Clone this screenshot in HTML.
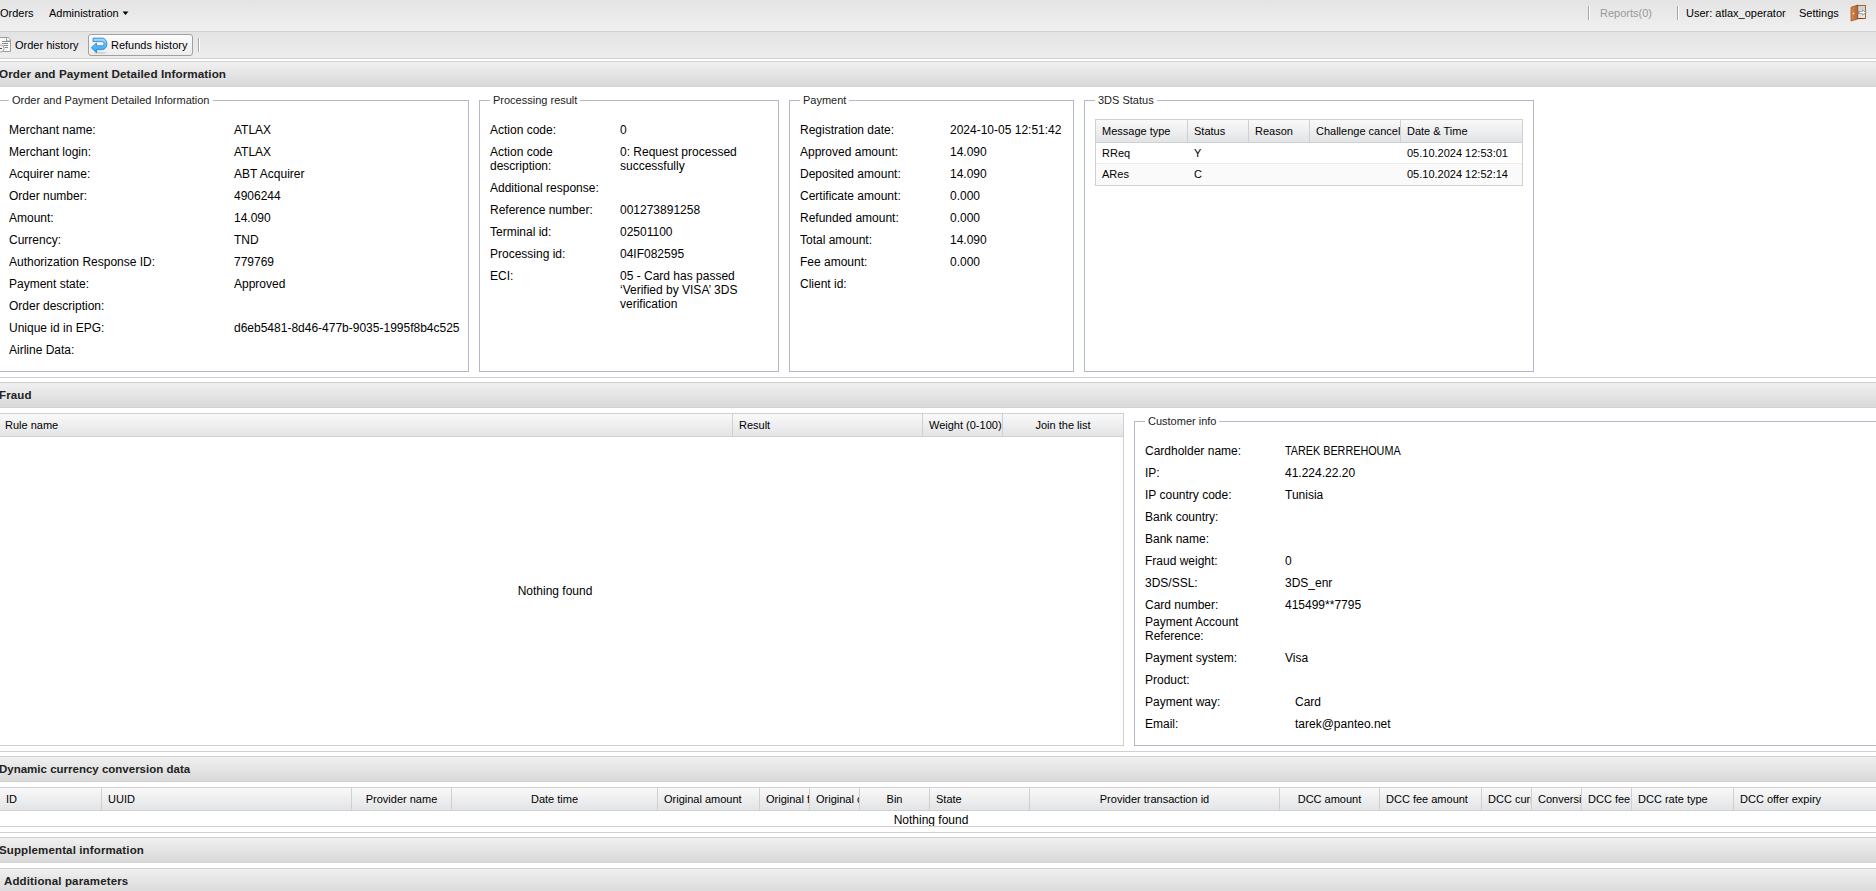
<!DOCTYPE html>
<html><head><meta charset="utf-8"><title>Order</title>
<style>
html,body{margin:0;padding:0;width:1876px;height:891px;overflow:hidden;background:#fff;}
body{position:relative;font-family:"Liberation Sans", sans-serif;}
.r{position:absolute;box-sizing:border-box;}
svg.r{overflow:visible}
.t{position:absolute;white-space:nowrap;font-family:"Liberation Sans", sans-serif;}
</style></head><body>
<div class="r" style="left:0px;top:0px;width:1876px;height:31px;background:linear-gradient(#e4e4e4,#f0f0f0);"></div>
<div class="r" style="left:0px;top:31px;width:1876px;height:1px;background:#d0d0d0;"></div>
<div class="r" style="left:0px;top:32px;width:1876px;height:26px;background:linear-gradient(#e3e3e3,#eeeeee);"></div>
<div class="r" style="left:0px;top:58px;width:1876px;height:1px;background:#d0d0d0;"></div>
<div class="t" style="left:0px;top:6.19px;font-size:11px;line-height:14px;color:#000;">Orders</div>
<div class="t" style="left:49px;top:6.19px;font-size:11px;line-height:14px;color:#000;">Administration</div>
<svg class="r" style="left:122px;top:11px" width="7" height="5"><path d="M0.5 0.5 L6.5 0.5 L3.5 4 Z" fill="#000"/></svg>
<div class="r" style="left:1588px;top:6px;width:1px;height:14px;background:#aca897;"></div>
<div class="r" style="left:1589px;top:6px;width:1px;height:14px;background:#fff;"></div>
<div class="t" style="left:1600px;top:6.19px;font-size:11px;line-height:14px;color:#999;">Reports(0)</div>
<div class="r" style="left:1677px;top:6px;width:1px;height:14px;background:#aca897;"></div>
<div class="r" style="left:1678px;top:6px;width:1px;height:14px;background:#fff;"></div>
<div class="t" style="left:1686px;top:6.19px;font-size:11px;line-height:14px;color:#000;">User: atlax_operator</div>
<div class="t" style="left:1799px;top:6.19px;font-size:11px;line-height:14px;color:#000;">Settings</div>
<svg class="r" style="left:1846px;top:2px" width="24" height="22">
<defs><linearGradient id="dr" x1="0" y1="0" x2="1" y2="0"><stop offset="0" stop-color="#d98c4f"/><stop offset="1" stop-color="#b0622c"/></linearGradient>
<linearGradient id="pn" x1="0" y1="0" x2="0" y2="1"><stop offset="0" stop-color="#c9d0d6"/><stop offset="1" stop-color="#e6eaee"/></linearGradient></defs>
<rect x="10.5" y="3.5" width="9" height="13" fill="url(#pn)" stroke="#b2622a" stroke-width="1"/>
<path d="M17 16.5 H10.5" stroke="#7a3a1a" stroke-width="1"/>
<path d="M13 10.5 H17.5" stroke="#9a9a9a" stroke-width="2.8" stroke-linecap="round"/>
<path d="M16 7.2 L20.8 10.5 L16 13.8 Z" fill="#9a9a9a"/>
<path d="M13.6 10.5 H17.5" stroke="#fff" stroke-width="1.3"/>
<path d="M16.8 8.7 L19.3 10.5 L16.8 12.3 Z" fill="#fff"/>
<path d="M5 5.3 L11.8 3 L11.8 17 L5 19 Z" fill="url(#dr)" stroke="#9a4a1e" stroke-width="0.7"/>
<circle cx="7.5" cy="11.5" r="0.8" fill="#fff"/>
</svg>
<svg class="r" style="left:0px;top:34px" width="14" height="20">
<path d="M-2 3.5 H8.5 L10.5 5.8 V17.5 H-2 Z" fill="#f8f8f8" stroke="#9c9c9c" stroke-width="1"/>
<path d="M6.5 3.5 V7 H10.5" fill="none" stroke="#a0a0a0" stroke-width="1"/>
<path d="M2 7.5 H10 M2 9.5 H8 M3.5 11.5 H8 M4.5 13.5 H8" stroke="#8c8c8c" stroke-width="1"/>
<circle cx="0.5" cy="14.5" r="3.6" fill="#f0f0f0" stroke="#a8a8a8" stroke-width="1"/>
<path d="M-1 14.5 H2" stroke="#555" stroke-width="1"/>
</svg>
<div class="t" style="left:15px;top:38.19px;font-size:11px;line-height:14px;color:#000;">Order history</div>
<div class="r" style="left:88px;top:34px;width:105px;height:22px;border:1px solid #a0a0a0;border-radius:3px;background:linear-gradient(#fdfdfd,#ececec);"></div>
<svg class="r" style="left:89px;top:35px" width="22" height="20">
<defs><linearGradient id="bl" x1="0" y1="0" x2="0" y2="1"><stop offset="0" stop-color="#9ee0ff"/><stop offset="0.5" stop-color="#5cc0f8"/><stop offset="1" stop-color="#12a8f5"/></linearGradient></defs>
<ellipse cx="11" cy="17.8" rx="6" ry="1" fill="#000" opacity="0.12"/>
<path d="M4 3.1 H13.2 A4.7 5.75 0 0 1 13.2 14.6 H7.6 V17.7 L2.3 12.8 L7.4 8 V10.8 H13.2 A1.9 2.1 0 0 0 13.2 6.6 H4 Z" fill="url(#bl)" stroke="#2a78cc" stroke-width="0.8" stroke-linejoin="round"/>
</svg>
<div class="t" style="left:111px;top:38.19px;font-size:11px;line-height:14px;color:#000;">Refunds history</div>
<div class="r" style="left:198px;top:38px;width:1px;height:14px;background:#aca897;"></div>
<div class="r" style="left:199px;top:38px;width:1px;height:14px;background:#fff;"></div>
<div class="r" style="left:0px;top:59px;width:1876px;height:2px;background:#fff;"></div>
<div class="r" style="left:0px;top:61px;width:1876px;height:1px;background:#d0d0d0;"></div>
<div class="r" style="left:0px;top:62px;width:1876px;height:24px;background:linear-gradient(#f0f0f0,#d9d9d9);"></div>
<div class="r" style="left:0px;top:86px;width:1876px;height:1px;background:#d2d2d2;"></div>
<div class="t" style="left:-1px;top:66.60px;font-size:11.7px;line-height:14.7px;color:#222;font-weight:bold;letter-spacing:0.08px;">Order and Payment Detailed Information</div>
<div class="r" style="left:-2px;top:100px;width:471px;height:272px;border:1px solid #b5b8c8;"></div>
<div class="t" style="left:9px;top:93px;padding:0 3px;background:#fff;font-size:11px;line-height:14px;color:#222;">Order and Payment Detailed Information</div>
<div class="r" style="left:479px;top:100px;width:300px;height:272px;border:1px solid #b5b8c8;"></div>
<div class="t" style="left:490px;top:93px;padding:0 3px;background:#fff;font-size:11px;line-height:14px;color:#222;">Processing result</div>
<div class="r" style="left:789px;top:100px;width:285px;height:272px;border:1px solid #b5b8c8;"></div>
<div class="t" style="left:800px;top:93px;padding:0 3px;background:#fff;font-size:11px;line-height:14px;color:#222;">Payment</div>
<div class="r" style="left:1084px;top:100px;width:450px;height:272px;border:1px solid #b5b8c8;"></div>
<div class="t" style="left:1095px;top:93px;padding:0 3px;background:#fff;font-size:11px;line-height:14px;color:#222;">3DS Status</div>
<div class="t" style="left:9px;top:123.34px;font-size:12px;line-height:15px;color:#000;">Merchant name:</div>
<div class="t" style="left:234px;top:123.34px;font-size:12px;line-height:15px;color:#000;">ATLAX</div>
<div class="t" style="left:9px;top:145.34px;font-size:12px;line-height:15px;color:#000;">Merchant login:</div>
<div class="t" style="left:234px;top:145.34px;font-size:12px;line-height:15px;color:#000;">ATLAX</div>
<div class="t" style="left:9px;top:167.34px;font-size:12px;line-height:15px;color:#000;">Acquirer name:</div>
<div class="t" style="left:234px;top:167.34px;font-size:12px;line-height:15px;color:#000;">ABT Acquirer</div>
<div class="t" style="left:9px;top:189.34px;font-size:12px;line-height:15px;color:#000;">Order number:</div>
<div class="t" style="left:234px;top:189.34px;font-size:12px;line-height:15px;color:#000;">4906244</div>
<div class="t" style="left:9px;top:211.34px;font-size:12px;line-height:15px;color:#000;">Amount:</div>
<div class="t" style="left:234px;top:211.34px;font-size:12px;line-height:15px;color:#000;">14.090</div>
<div class="t" style="left:9px;top:233.34px;font-size:12px;line-height:15px;color:#000;">Currency:</div>
<div class="t" style="left:234px;top:233.34px;font-size:12px;line-height:15px;color:#000;">TND</div>
<div class="t" style="left:9px;top:255.34px;font-size:12px;line-height:15px;color:#000;">Authorization Response ID:</div>
<div class="t" style="left:234px;top:255.34px;font-size:12px;line-height:15px;color:#000;">779769</div>
<div class="t" style="left:9px;top:277.34px;font-size:12px;line-height:15px;color:#000;">Payment state:</div>
<div class="t" style="left:234px;top:277.34px;font-size:12px;line-height:15px;color:#000;">Approved</div>
<div class="t" style="left:9px;top:299.34px;font-size:12px;line-height:15px;color:#000;">Order description:</div>
<div class="t" style="left:9px;top:321.34px;font-size:12px;line-height:15px;color:#000;">Unique id in EPG:</div>
<div class="t" style="left:234px;top:321.34px;font-size:12px;line-height:15px;color:#000;">d6eb5481-8d46-477b-9035-1995f8b4c525</div>
<div class="t" style="left:9px;top:343.34px;font-size:12px;line-height:15px;color:#000;">Airline Data:</div>
<div class="t" style="left:490px;top:123.34px;font-size:12px;line-height:15px;color:#000;">Action code:</div>
<div class="t" style="left:620px;top:123.34px;font-size:12px;line-height:15px;color:#000;">0</div>
<div class="t" style="left:490px;top:145.34px;font-size:12px;line-height:15px;color:#000;">Action code</div>
<div class="t" style="left:490px;top:159.34px;font-size:12px;line-height:15px;color:#000;">description:</div>
<div class="t" style="left:620px;top:145.34px;font-size:12px;line-height:15px;color:#000;">0: Request processed</div>
<div class="t" style="left:620px;top:159.34px;font-size:12px;line-height:15px;color:#000;">successfully</div>
<div class="t" style="left:490px;top:181.34px;font-size:12px;line-height:15px;color:#000;">Additional response:</div>
<div class="t" style="left:490px;top:203.34px;font-size:12px;line-height:15px;color:#000;">Reference number:</div>
<div class="t" style="left:620px;top:203.34px;font-size:12px;line-height:15px;color:#000;">001273891258</div>
<div class="t" style="left:490px;top:225.34px;font-size:12px;line-height:15px;color:#000;">Terminal id:</div>
<div class="t" style="left:620px;top:225.34px;font-size:12px;line-height:15px;color:#000;">02501100</div>
<div class="t" style="left:490px;top:247.34px;font-size:12px;line-height:15px;color:#000;">Processing id:</div>
<div class="t" style="left:620px;top:247.34px;font-size:12px;line-height:15px;color:#000;">04IF082595</div>
<div class="t" style="left:490px;top:269.34px;font-size:12px;line-height:15px;color:#000;">ECI:</div>
<div class="t" style="left:620px;top:269.34px;font-size:12px;line-height:15px;color:#000;">05 - Card has passed</div>
<div class="t" style="left:620px;top:283.34px;font-size:12px;line-height:15px;color:#000;">&#8216;Verified by VISA&#8217; 3DS</div>
<div class="t" style="left:620px;top:297.34px;font-size:12px;line-height:15px;color:#000;">verification</div>
<div class="t" style="left:800px;top:123.34px;font-size:12px;line-height:15px;color:#000;">Registration date:</div>
<div class="t" style="left:950px;top:123.34px;font-size:12px;line-height:15px;color:#000;">2024-10-05 12:51:42</div>
<div class="t" style="left:800px;top:145.34px;font-size:12px;line-height:15px;color:#000;">Approved amount:</div>
<div class="t" style="left:950px;top:145.34px;font-size:12px;line-height:15px;color:#000;">14.090</div>
<div class="t" style="left:800px;top:167.34px;font-size:12px;line-height:15px;color:#000;">Deposited amount:</div>
<div class="t" style="left:950px;top:167.34px;font-size:12px;line-height:15px;color:#000;">14.090</div>
<div class="t" style="left:800px;top:189.34px;font-size:12px;line-height:15px;color:#000;">Certificate amount:</div>
<div class="t" style="left:950px;top:189.34px;font-size:12px;line-height:15px;color:#000;">0.000</div>
<div class="t" style="left:800px;top:211.34px;font-size:12px;line-height:15px;color:#000;">Refunded amount:</div>
<div class="t" style="left:950px;top:211.34px;font-size:12px;line-height:15px;color:#000;">0.000</div>
<div class="t" style="left:800px;top:233.34px;font-size:12px;line-height:15px;color:#000;">Total amount:</div>
<div class="t" style="left:950px;top:233.34px;font-size:12px;line-height:15px;color:#000;">14.090</div>
<div class="t" style="left:800px;top:255.34px;font-size:12px;line-height:15px;color:#000;">Fee amount:</div>
<div class="t" style="left:950px;top:255.34px;font-size:12px;line-height:15px;color:#000;">0.000</div>
<div class="t" style="left:800px;top:277.34px;font-size:12px;line-height:15px;color:#000;">Client id:</div>
<div class="r" style="left:1095px;top:119px;width:428px;height:67px;border:1px solid #d0d0d0;background:#fff;"></div>
<div class="r" style="left:1096px;top:120px;width:426px;height:23px;background:linear-gradient(#f9f9f9,#e3e4e6);border-bottom:1px solid #d0d0d0;"></div>
<div class="r" style="left:1187px;top:120px;width:1px;height:23px;background:#d0d0d0;"></div>
<div class="r" style="left:1248px;top:120px;width:1px;height:23px;background:#d0d0d0;"></div>
<div class="r" style="left:1309px;top:120px;width:1px;height:23px;background:#d0d0d0;"></div>
<div class="r" style="left:1400px;top:120px;width:1px;height:23px;background:#d0d0d0;"></div>
<div class="t" style="left:1096px;top:124.19px;width:91px;overflow:hidden;box-sizing:border-box;padding-left:6px;text-align:left;font-size:11px;line-height:14px;color:#000;">Message type</div>
<div class="t" style="left:1188px;top:124.19px;width:60px;overflow:hidden;box-sizing:border-box;padding-left:6px;text-align:left;font-size:11px;line-height:14px;color:#000;">Status</div>
<div class="t" style="left:1249px;top:124.19px;width:60px;overflow:hidden;box-sizing:border-box;padding-left:6px;text-align:left;font-size:11px;line-height:14px;color:#000;">Reason</div>
<div class="t" style="left:1310px;top:124.19px;width:90px;overflow:hidden;box-sizing:border-box;padding-left:6px;text-align:left;font-size:11px;line-height:14px;color:#000;">Challenge cancel</div>
<div class="t" style="left:1401px;top:124.19px;width:121px;overflow:hidden;box-sizing:border-box;padding-left:6px;text-align:left;font-size:11px;line-height:14px;color:#000;">Date &amp; Time</div>
<div class="r" style="left:1096px;top:163px;width:426px;height:1px;background:#ededed;"></div>
<div class="r" style="left:1096px;top:164px;width:426px;height:21px;background:#fafafa;"></div>
<div class="t" style="left:1096px;top:146.19px;width:91px;overflow:hidden;box-sizing:border-box;padding-left:6px;text-align:left;font-size:11px;line-height:14px;color:#000;">RReq</div>
<div class="t" style="left:1188px;top:146.19px;width:60px;overflow:hidden;box-sizing:border-box;padding-left:6px;text-align:left;font-size:11px;line-height:14px;color:#000;">Y</div>
<div class="t" style="left:1401px;top:146.19px;width:121px;overflow:hidden;box-sizing:border-box;padding-left:6px;text-align:left;font-size:11px;line-height:14px;color:#000;">05.10.2024 12:53:01</div>
<div class="t" style="left:1096px;top:167.19px;width:91px;overflow:hidden;box-sizing:border-box;padding-left:6px;text-align:left;font-size:11px;line-height:14px;color:#000;">ARes</div>
<div class="t" style="left:1188px;top:167.19px;width:60px;overflow:hidden;box-sizing:border-box;padding-left:6px;text-align:left;font-size:11px;line-height:14px;color:#000;">C</div>
<div class="t" style="left:1401px;top:167.19px;width:121px;overflow:hidden;box-sizing:border-box;padding-left:6px;text-align:left;font-size:11px;line-height:14px;color:#000;">05.10.2024 12:52:14</div>
<div class="r" style="left:0px;top:377px;width:1876px;height:1px;background:#d0d0d0;"></div>
<div class="r" style="left:0px;top:382px;width:1876px;height:1px;background:#d0d0d0;"></div>
<div class="r" style="left:0px;top:383px;width:1876px;height:24px;background:linear-gradient(#f0f0f0,#d9d9d9);"></div>
<div class="r" style="left:0px;top:407px;width:1876px;height:1px;background:#d2d2d2;"></div>
<div class="t" style="left:-1px;top:387.77px;font-size:11.5px;line-height:14.5px;color:#222;font-weight:bold;letter-spacing:0.15px;">Fraud</div>
<div class="r" style="left:-1px;top:413px;width:1125px;height:333px;border:1px solid #d0d0d0;background:#fff;"></div>
<div class="r" style="left:0px;top:414px;width:1123px;height:23px;background:linear-gradient(#f9f9f9,#e3e4e6);border-bottom:1px solid #d0d0d0;"></div>
<div class="r" style="left:732px;top:414px;width:1px;height:23px;background:#d0d0d0;"></div>
<div class="r" style="left:922px;top:414px;width:1px;height:23px;background:#d0d0d0;"></div>
<div class="r" style="left:1002px;top:414px;width:1px;height:23px;background:#d0d0d0;"></div>
<div class="t" style="left:0px;top:418.19px;width:732px;overflow:hidden;box-sizing:border-box;padding-left:5px;text-align:left;font-size:11px;line-height:14px;color:#000;">Rule name</div>
<div class="t" style="left:733px;top:418.19px;width:189px;overflow:hidden;box-sizing:border-box;padding-left:6px;text-align:left;font-size:11px;line-height:14px;color:#000;">Result</div>
<div class="t" style="left:923px;top:418.19px;width:79px;overflow:hidden;box-sizing:border-box;padding-left:6px;text-align:left;font-size:11px;line-height:14px;color:#000;">Weight (0-100)</div>
<div class="t" style="left:1003px;top:418.19px;width:120px;overflow:hidden;box-sizing:border-box;text-align:center;font-size:11px;line-height:14px;color:#000;">Join the list</div>
<div class="t" style="left:255px;width:600px;text-align:center;top:584.34px;font-size:12px;line-height:15px;color:#000;">Nothing found</div>
<div class="r" style="left:1134px;top:421px;width:742px;height:325px;border:1px solid #b5b8c8;border-right:none;"></div>
<div class="t" style="left:1145px;top:414px;padding:0 3px;background:#fff;font-size:11px;line-height:14px;color:#222;">Customer info</div>
<div class="t" style="left:1145px;top:444.34px;font-size:12px;line-height:15px;color:#000;">Cardholder name:</div>
<div class="t" style="left:1285px;top:444.34px;font-size:12px;line-height:15px;color:#000;transform:scaleX(0.9);transform-origin:0 0;">TAREK BERREHOUMA</div>
<div class="t" style="left:1145px;top:466.34px;font-size:12px;line-height:15px;color:#000;">IP:</div>
<div class="t" style="left:1285px;top:466.34px;font-size:12px;line-height:15px;color:#000;">41.224.22.20</div>
<div class="t" style="left:1145px;top:488.34px;font-size:12px;line-height:15px;color:#000;">IP country code:</div>
<div class="t" style="left:1285px;top:488.34px;font-size:12px;line-height:15px;color:#000;">Tunisia</div>
<div class="t" style="left:1145px;top:510.34px;font-size:12px;line-height:15px;color:#000;">Bank country:</div>
<div class="t" style="left:1145px;top:532.34px;font-size:12px;line-height:15px;color:#000;">Bank name:</div>
<div class="t" style="left:1145px;top:554.34px;font-size:12px;line-height:15px;color:#000;">Fraud weight:</div>
<div class="t" style="left:1285px;top:554.34px;font-size:12px;line-height:15px;color:#000;">0</div>
<div class="t" style="left:1145px;top:576.34px;font-size:12px;line-height:15px;color:#000;">3DS/SSL:</div>
<div class="t" style="left:1285px;top:576.34px;font-size:12px;line-height:15px;color:#000;">3DS_enr</div>
<div class="t" style="left:1145px;top:598.34px;font-size:12px;line-height:15px;color:#000;">Card number:</div>
<div class="t" style="left:1285px;top:598.34px;font-size:12px;line-height:15px;color:#000;">415499**7795</div>
<div class="t" style="left:1145px;top:615.34px;font-size:12px;line-height:15px;color:#000;">Payment Account</div>
<div class="t" style="left:1145px;top:629.34px;font-size:12px;line-height:15px;color:#000;">Reference:</div>
<div class="t" style="left:1145px;top:651.34px;font-size:12px;line-height:15px;color:#000;">Payment system:</div>
<div class="t" style="left:1285px;top:651.34px;font-size:12px;line-height:15px;color:#000;">Visa</div>
<div class="t" style="left:1145px;top:673.34px;font-size:12px;line-height:15px;color:#000;">Product:</div>
<div class="t" style="left:1145px;top:695.34px;font-size:12px;line-height:15px;color:#000;">Payment way:</div>
<div class="t" style="left:1295px;top:695.34px;font-size:12px;line-height:15px;color:#000;">Card</div>
<div class="t" style="left:1145px;top:717.34px;font-size:12px;line-height:15px;color:#000;">Email:</div>
<div class="t" style="left:1295px;top:717.34px;font-size:12px;line-height:15px;color:#000;">tarek@panteo.net</div>
<div class="r" style="left:0px;top:751px;width:1876px;height:1px;background:#d0d0d0;"></div>
<div class="r" style="left:0px;top:756px;width:1876px;height:1px;background:#d0d0d0;"></div>
<div class="r" style="left:0px;top:757px;width:1876px;height:24px;background:linear-gradient(#f0f0f0,#d9d9d9);"></div>
<div class="r" style="left:0px;top:781px;width:1876px;height:1px;background:#d2d2d2;"></div>
<div class="t" style="left:-1px;top:761.77px;font-size:11.5px;line-height:14.5px;color:#222;font-weight:bold;letter-spacing:0px;">Dynamic currency conversion data</div>
<div class="r" style="left:0px;top:787px;width:1876px;height:1px;background:#d0d0d0;"></div>
<div class="r" style="left:0px;top:788px;width:1876px;height:23px;background:linear-gradient(#f9f9f9,#e3e4e6);border-bottom:1px solid #d0d0d0;"></div>
<div class="r" style="left:101px;top:788px;width:1px;height:23px;background:#d0d0d0;"></div>
<div class="r" style="left:351px;top:788px;width:1px;height:23px;background:#d0d0d0;"></div>
<div class="r" style="left:451px;top:788px;width:1px;height:23px;background:#d0d0d0;"></div>
<div class="r" style="left:657px;top:788px;width:1px;height:23px;background:#d0d0d0;"></div>
<div class="r" style="left:759px;top:788px;width:1px;height:23px;background:#d0d0d0;"></div>
<div class="r" style="left:809px;top:788px;width:1px;height:23px;background:#d0d0d0;"></div>
<div class="r" style="left:859px;top:788px;width:1px;height:23px;background:#d0d0d0;"></div>
<div class="r" style="left:929px;top:788px;width:1px;height:23px;background:#d0d0d0;"></div>
<div class="r" style="left:1029px;top:788px;width:1px;height:23px;background:#d0d0d0;"></div>
<div class="r" style="left:1279px;top:788px;width:1px;height:23px;background:#d0d0d0;"></div>
<div class="r" style="left:1379px;top:788px;width:1px;height:23px;background:#d0d0d0;"></div>
<div class="r" style="left:1481px;top:788px;width:1px;height:23px;background:#d0d0d0;"></div>
<div class="r" style="left:1531px;top:788px;width:1px;height:23px;background:#d0d0d0;"></div>
<div class="r" style="left:1581px;top:788px;width:1px;height:23px;background:#d0d0d0;"></div>
<div class="r" style="left:1631px;top:788px;width:1px;height:23px;background:#d0d0d0;"></div>
<div class="r" style="left:1733px;top:788px;width:1px;height:23px;background:#d0d0d0;"></div>
<div class="t" style="left:0px;top:792.19px;width:101px;overflow:hidden;box-sizing:border-box;padding-left:6px;text-align:left;font-size:11px;line-height:14px;color:#000;">ID</div>
<div class="t" style="left:102px;top:792.19px;width:249px;overflow:hidden;box-sizing:border-box;padding-left:6px;text-align:left;font-size:11px;line-height:14px;color:#000;">UUID</div>
<div class="t" style="left:352px;top:792.19px;width:99px;overflow:hidden;box-sizing:border-box;text-align:center;font-size:11px;line-height:14px;color:#000;">Provider name</div>
<div class="t" style="left:452px;top:792.19px;width:205px;overflow:hidden;box-sizing:border-box;text-align:center;font-size:11px;line-height:14px;color:#000;">Date time</div>
<div class="t" style="left:658px;top:792.19px;width:101px;overflow:hidden;box-sizing:border-box;padding-left:6px;text-align:left;font-size:11px;line-height:14px;color:#000;">Original amount</div>
<div class="t" style="left:760px;top:792.19px;width:49px;overflow:hidden;box-sizing:border-box;padding-left:6px;text-align:left;font-size:11px;line-height:14px;color:#000;">Original fee</div>
<div class="t" style="left:810px;top:792.19px;width:49px;overflow:hidden;box-sizing:border-box;padding-left:6px;text-align:left;font-size:11px;line-height:14px;color:#000;">Original currency</div>
<div class="t" style="left:860px;top:792.19px;width:69px;overflow:hidden;box-sizing:border-box;text-align:center;font-size:11px;line-height:14px;color:#000;">Bin</div>
<div class="t" style="left:930px;top:792.19px;width:99px;overflow:hidden;box-sizing:border-box;padding-left:6px;text-align:left;font-size:11px;line-height:14px;color:#000;">State</div>
<div class="t" style="left:1030px;top:792.19px;width:249px;overflow:hidden;box-sizing:border-box;text-align:center;font-size:11px;line-height:14px;color:#000;">Provider transaction id</div>
<div class="t" style="left:1280px;top:792.19px;width:99px;overflow:hidden;box-sizing:border-box;text-align:center;font-size:11px;line-height:14px;color:#000;">DCC amount</div>
<div class="t" style="left:1380px;top:792.19px;width:101px;overflow:hidden;box-sizing:border-box;padding-left:6px;text-align:left;font-size:11px;line-height:14px;color:#000;">DCC fee amount</div>
<div class="t" style="left:1482px;top:792.19px;width:49px;overflow:hidden;box-sizing:border-box;padding-left:6px;text-align:left;font-size:11px;line-height:14px;color:#000;">DCC currency</div>
<div class="t" style="left:1532px;top:792.19px;width:49px;overflow:hidden;box-sizing:border-box;padding-left:6px;text-align:left;font-size:11px;line-height:14px;color:#000;">Conversion rate</div>
<div class="t" style="left:1582px;top:792.19px;width:49px;overflow:hidden;box-sizing:border-box;padding-left:6px;text-align:left;font-size:11px;line-height:14px;color:#000;">DCC fee</div>
<div class="t" style="left:1632px;top:792.19px;width:101px;overflow:hidden;box-sizing:border-box;padding-left:6px;text-align:left;font-size:11px;line-height:14px;color:#000;">DCC rate type</div>
<div class="t" style="left:1734px;top:792.19px;width:142px;overflow:hidden;box-sizing:border-box;padding-left:6px;text-align:left;font-size:11px;line-height:14px;color:#000;">DCC offer expiry</div>
<div class="t" style="left:631px;width:600px;text-align:center;top:813.34px;font-size:12px;line-height:15px;color:#000;">Nothing found</div>
<div class="r" style="left:0px;top:826px;width:1876px;height:1px;background:#d0d0d0;"></div>
<div class="r" style="left:0px;top:832px;width:1876px;height:1px;background:#d0d0d0;"></div>
<div class="r" style="left:0px;top:837px;width:1876px;height:1px;background:#d0d0d0;"></div>
<div class="r" style="left:0px;top:838px;width:1876px;height:24px;background:linear-gradient(#f0f0f0,#d9d9d9);"></div>
<div class="r" style="left:0px;top:862px;width:1876px;height:1px;background:#d2d2d2;"></div>
<div class="t" style="left:-1px;top:842.77px;font-size:11.5px;line-height:14.5px;color:#222;font-weight:bold;letter-spacing:0.13px;">Supplemental information</div>
<div class="r" style="left:0px;top:868px;width:1876px;height:1px;background:#d0d0d0;"></div>
<div class="r" style="left:0px;top:868px;width:1876px;height:1px;background:#d0d0d0;"></div>
<div class="r" style="left:0px;top:869px;width:1876px;height:24px;background:linear-gradient(#f0f0f0,#d9d9d9);"></div>
<div class="r" style="left:0px;top:893px;width:1876px;height:1px;background:#d2d2d2;"></div>
<div class="t" style="left:4px;top:873.77px;font-size:11.5px;line-height:14.5px;color:#222;font-weight:bold;letter-spacing:0.14px;">Additional parameters</div>
</body></html>
